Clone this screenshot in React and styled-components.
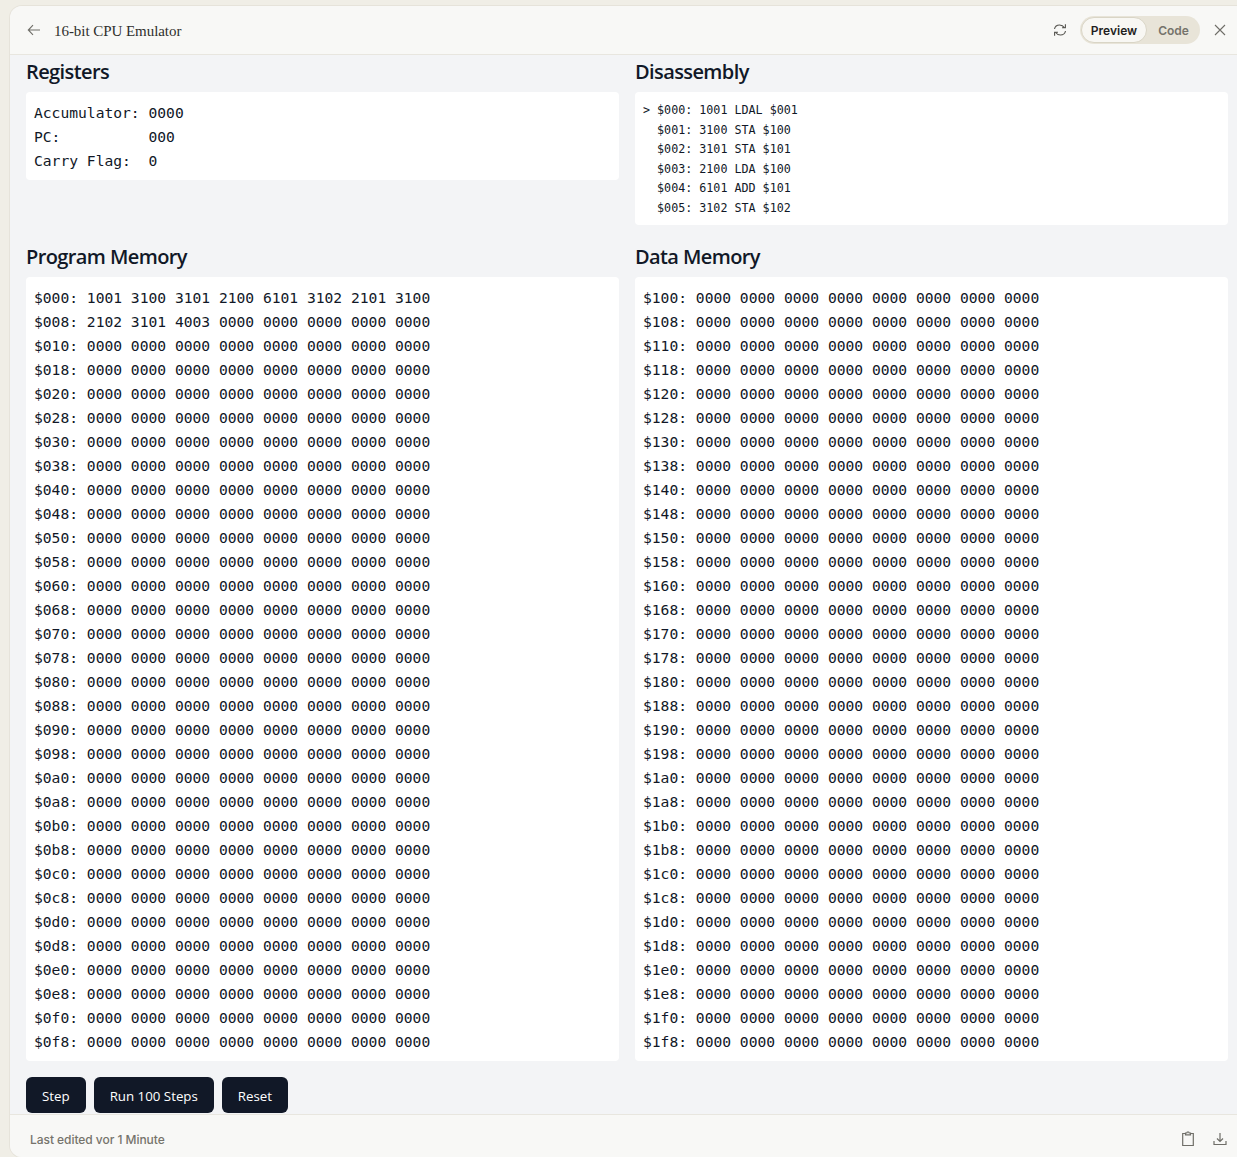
import React from "react";
import styled, { createGlobalStyle } from "styled-components";

const Global = createGlobalStyle`
  html, body { margin: 0; padding: 0; height: 100%; overflow: hidden; background: #f0eee6; }
  * { box-sizing: border-box; }
`;
const Shell = styled.div`
  height: 1157px;
  padding: 6px 0 0 10px;
`;
const Panel = styled.div`
  height: 100%;
  display: flex;
  flex-direction: column;
  background: #f3f4f6;
  border-radius: 12px 0 0 12px;
  box-shadow: 0 0 0 1px #e6e3da;
  overflow: hidden;
`;
const Header = styled.header`
  height: 49px;
  flex: none;
  display: flex;
  align-items: center;
  padding: 0 11px 0 16px;
  background: #f8f8f6;
  border-bottom: 1px solid #e8e6df;
  color: #3d3d3a;
`;
const IconBtn = styled.span`
  display: flex;
  align-items: center;
  justify-content: center;
  color: ${p => p.$color || "#6f6e68"};
`;
const Title = styled.h1`
  margin: 2px 0 0 12px;
  font: 400 15px/20px "Liberation Serif", serif;
  letter-spacing: -0.05px;
  color: #2f2f2c;
  flex: 1;
`;
const Toggle = styled.div`
  display: flex;
  align-items: center;
  width: 120px;
  height: 28px;
  background: #e8e4d8;
  border-radius: 14px;
  margin: 0 14px 0 13px;
`;
const ToggleOn = styled.span`
  width: 66px;
  height: 26px;
  margin-left: 1px;
  display: flex;
  align-items: center;
  justify-content: center;
  background: #f8f7f3;
  border: 1px solid #d9d5c6;
  border-radius: 13px;
  font: 600 12px "Inter", sans-serif;
  color: #1f1e1d;
`;
const ToggleOff = styled.span`
  flex: 1;
  text-align: center;
  font: 600 12px "Inter", sans-serif;
  color: #75736b;
`;
const Content = styled.main`
  flex: 1;
  min-height: 0;
  padding: 1px 9px 0 16px;
  overflow: hidden;
`;
const Grid = styled.div`
  display: grid;
  grid-template-columns: 593px 593px;
  column-gap: 16px;
  row-gap: 16px;
`;
const Section = styled.section``;
const Heading = styled.h2`
  margin: 0 0 4px;
  font: 600 20px/32px "Open Sans", sans-serif;
  letter-spacing: -0.6px;
  color: #111827;
`;
const Card = styled.pre`
  margin: 0;
  padding: 9px 8px 7px;
  background: #fff;
  border-radius: 4px;
  font: 400 14.63px/24px "DejaVu Sans Mono", monospace;
  color: #111827;
`;
const SmallCard = styled(Card)`
  font-size: 11.7px;
  line-height: 19.5px;
`;
const Buttons = styled.div`
  display: flex;
  gap: 8px;
  margin-top: 16px;
`;
const Btn = styled.button`
  height: 36px;
  padding: 1px 16px 0;
  border: 0;
  border-radius: 6px;
  background: #111827;
  color: #fff;
  font: 400 13.3px "Open Sans", sans-serif;
`;
const Footer = styled.footer`
  height: 43px;
  flex: none;
  display: flex;
  align-items: center;
  padding: 6px 10px 0 20px;
  gap: 18px;
  background: #f8f8f6;
  border-top: 1px solid #e8e6df;
`;
const FootText = styled.span`
  flex: 1;
  font: 500 12px "Inter", sans-serif;
  letter-spacing: -0.05px;
  color: #75736b;
`;

const hex = (n, w) => n.toString(16).padStart(w, "0");
const memory = (start, data = []) =>
  Array.from({ length: 32 }, (_, r) => {
    const cells = Array.from({ length: 8 }, (_, c) => data[r * 8 + c] || "0000");
    return `$${hex(start + r * 8, 3)}: ${cells.join(" ")}`;
  }).join("\n");

const program = ["1001","3100","3101","2100","6101","3102","2101","3100","2102","3101","4003"];
const regs = "Accumulator: 0000\nPC:          000\nCarry Flag:  0";
const dis = [
  "> $000: 1001 LDAL $001",
  "  $001: 3100 STA $100",
  "  $002: 3101 STA $101",
  "  $003: 2100 LDA $100",
  "  $004: 6101 ADD $101",
  "  $005: 3102 STA $102",
].join("\n");

const Back = () => (
  <svg width="16" height="16" viewBox="0 0 16 16" fill="none" stroke="currentColor" strokeWidth="1.1">
    <path d="M14 8H2.500M7 3.200 2.300 8 7 12.800" />
  </svg>
);
const Refresh = () => (
  <svg width="14" height="14" viewBox="0 0 14 14" fill="none" stroke="currentColor" strokeWidth="1.1">
    <path d="M1.500 6C2 3.500 4 2 6.600 2c2.200 0 3.700 1 5 2.800M12.400 1.200v3.600H9" />
    <path d="M12.500 8c-.5 2.500-2.500 4-5.100 4-2.200 0-3.700-1-5-2.800M1.600 12.800V9.200H5" />
  </svg>
);
const Close = () => (
  <svg width="12" height="12" viewBox="0 0 12 12" fill="none" stroke="currentColor" strokeWidth="1.1">
    <path d="M1 1l10 10M11 1 1 11" />
  </svg>
);
const Clipboard = () => (
  <svg width="14" height="16" viewBox="0 0 14 16" fill="none" stroke="currentColor" strokeWidth="1.2">
    <path d="M4.500 2.500H1.700v12h10.600v-12H9.500" />
    <path d="M4.500 3.800V2h1.300l.5-1h1.400l.5 1h1.300v1.800z" />
  </svg>
);
const Download = () => (
  <svg width="14" height="14" viewBox="0 0 14 14" fill="none" stroke="currentColor" strokeWidth="1.2">
    <path d="M7 1v8M4 6.500 7 9.500l3-3M1 9v3.500h12V9" />
  </svg>
);

export default function App() {
  return (
    <>
      <Global />
      <Shell>
        <Panel>
          <Header>
            <IconBtn><Back /></IconBtn>
            <Title>16-bit CPU Emulator</Title>
            <IconBtn $color="#55544f"><Refresh /></IconBtn>
            <Toggle>
              <ToggleOn>Preview</ToggleOn>
              <ToggleOff>Code</ToggleOff>
            </Toggle>
            <IconBtn><Close /></IconBtn>
          </Header>
          <Content>
            <Grid>
              <Section>
                <Heading>Registers</Heading>
                <Card>{regs}</Card>
              </Section>
              <Section>
                <Heading>Disassembly</Heading>
                <SmallCard>{dis}</SmallCard>
              </Section>
              <Section>
                <Heading>Program Memory</Heading>
                <Card>{memory(0, program)}</Card>
              </Section>
              <Section>
                <Heading>Data Memory</Heading>
                <Card>{memory(0x100)}</Card>
              </Section>
            </Grid>
            <Buttons>
              <Btn>Step</Btn>
              <Btn>Run 100 Steps</Btn>
              <Btn>Reset</Btn>
            </Buttons>
          </Content>
          <Footer>
            <FootText>Last edited vor 1 Minute</FootText>
            <IconBtn><Clipboard /></IconBtn>
            <IconBtn><Download /></IconBtn>
          </Footer>
        </Panel>
      </Shell>
    </>
  );
}
